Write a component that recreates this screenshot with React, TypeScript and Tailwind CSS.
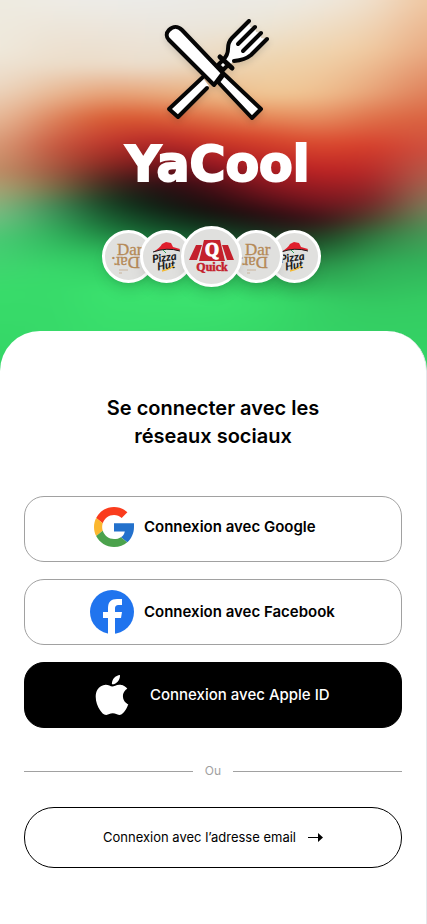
import type { ReactNode } from "react";

// Vertical colour ramps of the header backdrop, left to right: [y, colour]
const ramps: [number, string][][] = [
    [[0, "#eeebe0"], [50, "#efe9dc"], [85, "#ecdac6"], [115, "#e8bf9f"], [145, "#d89c78"], [170, "#c29068"], [190, "#a8a878"], [215, "#78c084"], [240, "#48cc74"], [290, "#38dc6a"], [370, "#34d566"]],
    [[0, "#eeece5"], [65, "#ecdcc8"], [95, "#e8b58f"], [120, "#dc8058"], [145, "#c8583e"], [168, "#a85840"], [187, "#807048"], [207, "#40905a"], [230, "#30b05c"], [270, "#38d96a"], [370, "#36da68"]],
    [[0, "#edece8"], [65, "#ecdcc8"], [95, "#e69c70"], [117, "#d9592f"], [140, "#c2382c"], [160, "#952820"], [180, "#4a241c"], [200, "#143c20"], [225, "#1a7038"], [255, "#2fc45f"], [290, "#3be26e"], [370, "#36da68"]],
    [[0, "#ebebe8"], [65, "#ebdfcf"], [95, "#e8a678"], [117, "#dc5c34"], [140, "#b82828"], [165, "#6e121c"], [185, "#240d12"], [205, "#0f1a12"], [230, "#14542c"], [260, "#2bb858"], [290, "#3be26e"], [370, "#36d868"]],
    [[0, "#ebe9e4"], [25, "#ebe6dc"], [65, "#ecd5b6"], [98, "#ebb07c"], [117, "#e07448"], [137, "#d23c26"], [160, "#a31a24"], [185, "#4a0d16"], [210, "#140c0c"], [230, "#123a20"], [260, "#2bb558"], [295, "#3ce470"], [370, "#34d264"]],
    [[0, "#ecebe5"], [25, "#ece5d6"], [60, "#eed5b0"], [95, "#f0c896"], [114, "#e8935f"], [137, "#d9482c"], [165, "#b81f24"], [190, "#7a141e"], [215, "#240c10"], [235, "#183020"], [265, "#2aa852"], [300, "#38de6a"], [370, "#34d264"]],
    [[0, "#eee9df"], [55, "#f0d3ac"], [95, "#efbf8e"], [119, "#e68c5f"], [142, "#dc4e30"], [170, "#c02424"], [200, "#7d161f"], [220, "#381016"], [240, "#1c4824"], [265, "#2a9048"], [300, "#35cf64"], [370, "#34d566"]],
    [[0, "#f0e0cc"], [50, "#f0caa0"], [92, "#e8a478"], [117, "#df7048"], [145, "#d63c2a"], [175, "#b02426"], [200, "#7a2024"], [218, "#50402c"], [236, "#2f7a40"], [265, "#30b058"], [310, "#34cc62"], [370, "#34d566"]],
    [[0, "#efc59e"], [50, "#e8a880"], [90, "#df805a"], [120, "#d9603f"], [150, "#cc5040"], [180, "#aa6450"], [205, "#80805c"], [230, "#4c9858"], [260, "#32b25a"], [300, "#34cc62"], [370, "#34d566"]],
];

function Backdrop() {
    return (
        <svg
            className="absolute inset-0 h-full w-full"
            viewBox="0 0 424 370"
            preserveAspectRatio="none"
            aria-hidden="true"
        >
            <defs>
                {ramps.map((ramp, i) => (
                    <linearGradient key={i} id={`ramp-${i}`} x1="0" y1="0" x2="0" y2="370" gradientUnits="userSpaceOnUse">
                        {ramp.map(([y, color]) => (
                            <stop key={y} offset={y / 370} stopColor={color} />
                        ))}
                    </linearGradient>
                ))}
                <filter id="soften" x="-200" y="-60" width="824" height="490" filterUnits="userSpaceOnUse" colorInterpolationFilters="sRGB">
                    <feGaussianBlur stdDeviation="26 6" />
                </filter>
            </defs>
            <g filter="url(#soften)">
                {ramps.map((_, i) => {
                    const first = i === 0;
                    const last = i === ramps.length - 1;
                    const x = first ? -120 : i * 53 - 27;
                    const end = last ? 540 : i * 53 + 27;
                    return <rect key={i} x={x} y="-40" width={end - x} height="450" fill={`url(#ramp-${i})`} />;
                })}
            </g>
        </svg>
    );
}

function Cutlery() {
    return (
        <svg
            className="h-[115px] w-[125px] drop-shadow-md"
            viewBox="0 0 125 115"
            fill="none"
            stroke="#060606"
            strokeWidth="4"
            strokeLinecap="round"
            strokeLinejoin="round"
            aria-hidden="true"
        >
            <path d="M48 68 14 99 23 107 54 76Z" fill="#fff" stroke="none" />
            <path d="M48 67 14 99 23 107 52 78" />
            <path
                d="M94 11 77 28Q73 33 73 43L68 51 73 56 79 51Q90 51 96 45L112 29 106 28 106 23 101 22 100 17 95 17Z"
                fill="#fff"
                stroke="none"
            />
            <path d="M94 11 77 28Q73 32 73 39Q73 45 68 50" />
            <path d="M100 17 83 34M106 23 88 41" />
            <path d="M112 29 96 45Q90 50 79 51" />
            <path d="M65 47 77 58" strokeWidth="5" />
            <path d="M68 50 73 55 68 60 63 55Z" fill="#fff" />
            <path d="M69 64 106 99 97 108 63 72Z" fill="#fff" />
            <path d="M14 20C18 16 23 16 27 20L68 63 59 75 14 30C11 27 11 23 14 20Z" fill="#fff" />
        </svg>
    );
}

function DarLogo() {
    return (
        <svg className="h-full w-full" viewBox="0 0 47 47" fontFamily="Liberation Serif, serif" fontSize="17" fill="#b58a58" stroke="#b58a58" strokeWidth="0.300">
            <text x="12" y="22">Dar</text>
            <text x="11" y="22" transform="rotate(180 23 23)">Dar.</text>
            <path d="M14 37H23M14 40H17" strokeWidth="0.500" />
        </svg>
    );
}

function PizzaHutLogo() {
    return (
        <svg className="h-full w-full" viewBox="0 0 47 47">
            <path d="M10 19Q17 15 19 11L23 9 28 10 30 14 37 16 36 18Q24 14 10 19Z" fill="#e01f2d" />
            <path d="M10 19Q24 14 37 18" fill="none" stroke="#1b1b1b" />
            <path d="M20 17 23 20" stroke="#2c9a56" />
            <g fontFamily="Lato, sans-serif" fontWeight="900" fontStyle="italic" fontSize="11" fill="#1b1b1b">
                <text x="9" y="28" transform="rotate(-8 24 24)">Pizza</text>
                <text x="13" y="36" transform="rotate(-8 24 24)">Hut</text>
            </g>
            <path d="M19 38Q25 37 31 33" fill="none" stroke="#f4b92f" strokeWidth="1.500" />
        </svg>
    );
}

function QuickLogo() {
    return (
        <svg className="h-full w-full" viewBox="0 0 55 55" fill="#c4202c" fontFamily="Liberation Serif, serif" fontWeight="700">
            <path d="M20 11H36L41 32H15Z" />
            <path d="M12 16H18L13 31H5Z" />
            <path d="M38 16H44L50 31H43Z" />
            <text x="28" y="27" fontSize="18" fill="#fff" stroke="#fff" textAnchor="middle">Q</text>
            <text x="28" y="42" fontSize="12" stroke="#c4202c" strokeWidth="0.500" textAnchor="middle">Quick</text>
        </svg>
    );
}

function Badge({ className, children }: { className: string; children: ReactNode }) {
    return (
        <div className={`relative shrink-0 overflow-hidden rounded-full border-3 border-white bg-[#e0e0de] shadow-lg ${className}`}>
            {children}
        </div>
    );
}

function GoogleIcon() {
    return (
        <svg className="size-10" viewBox="0 0 48 48" aria-hidden="true">
            <path fill="#fa3c1d" d="M24 9.500c3.540 0 6.710 1.220 9.210 3.600l6.850-6.850C35.900 2.380 30.470 0 24 0 14.620 0 6.510 5.380 2.560 13.220l7.980 6.190C12.430 13.720 17.740 9.500 24 9.500z" />
            <path fill="#2371cc" d="M48 19.500H24v9.800h13c-.6 3-2.300 5.500-4.700 7.100l7.700 6c4.500-4.200 8-10.400 8-18.400z" />
            <path fill="#fbb72f" d="M10.530 28.590c-.480-1.450-.760-2.990-.760-4.590s.270-3.140.760-4.590l-7.980-6.190C.920 16.460 0 20.120 0 24c0 3.880.920 7.540 2.560 10.780l7.970-6.190z" />
            <path fill="#4ba24c" d="M24 48c6.480 0 11.930-2.130 15.890-5.810l-7.730-6c-2.150 1.450-4.920 2.300-8.160 2.300-6.260 0-11.570-4.220-13.470-9.910l-7.980 6.190C6.510 42.620 14.620 48 24 48z" />
        </svg>
    );
}

function FacebookIcon() {
    return (
        <svg className="size-11" viewBox="0 0 44 44" aria-hidden="true">
            <circle cx="22" cy="22" r="22" fill="#2074ee" />
            <path d="M18 44V28H13V22H18V18C18 12 21 9 27 9H32V15H29C26 15 25 16 25 19V22H32L31 28H25V44Z" fill="#fff" />
        </svg>
    );
}

function AppleIcon() {
    return (
        <svg className="size-10" viewBox="0 0 24 24" fill="#fff" aria-hidden="true">
            <path d="M12.152 6.896c-.948 0-2.415-1.078-3.96-1.04-2.04.027-3.91 1.183-4.961 3.014-2.117 3.675-.546 9.103 1.519 12.09 1.013 1.454 2.208 3.09 3.792 3.039 1.52-.065 2.09-.987 3.935-.987 1.831 0 2.35.987 3.96.948 1.637-.026 2.676-1.48 3.676-2.948 1.156-1.688 1.636-3.325 1.662-3.415-.039-.013-3.182-1.221-3.22-4.857-.026-3.04 2.48-4.494 2.597-4.559-1.429-2.09-3.623-2.324-4.39-2.376-2-.156-3.675 1.09-4.61 1.09zM15.53 3.83c.843-1.012 1.4-2.427 1.245-3.83-1.207.052-2.662.805-3.532 1.818-.78.896-1.454 2.338-1.273 3.714 1.338.104 2.715-.688 3.559-1.701" />
        </svg>
    );
}

function SocialButton({ icon, label, className }: { icon: ReactNode; label: string; className: string }) {
    return (
        <button type="button" className={`h-[66px] w-full rounded-[20px] border text-[15px] ${className}`}>
            <span className="mx-auto flex w-[246px] items-center whitespace-nowrap">{icon}{label}</span>
        </button>
    );
}

function App() {
    return (
        <main className="relative flex min-h-screen flex-col font-['Inter',sans-serif] text-black">
            <header className="relative flex h-[371px] flex-col items-center overflow-hidden pt-[10px]">
                <Backdrop />
                <div className="relative flex flex-col items-center">
                    <div className="pl-2"><Cutlery /></div>
                    <h1 className="mt-2 pl-2 font-['DejaVu_Sans',sans-serif] text-[49px] leading-[64px] font-bold text-white [-webkit-text-stroke:2px_white]">
                        YaCool
                    </h1>
                    <div className="mt-[29px] flex items-center pr-1">
                        <Badge className="size-[53px]"><DarLogo /></Badge>
                        <Badge className="-ml-[15px] size-[53px]"><PizzaHutLogo /></Badge>
                        <Badge className="z-20 -ml-3 size-[61px]"><QuickLogo /></Badge>
                        <Badge className="z-10 -ml-3 size-[53px]"><DarLogo /></Badge>
                        <Badge className="-ml-[15px] size-[53px]"><PizzaHutLogo /></Badge>
                    </div>
                </div>
            </header>

            <section className="relative -mt-10 flex-1 rounded-t-[40px] border-r border-gray-200 bg-white px-6 pt-[63px] pb-14">
                <h2 className="mx-auto w-[240px] text-center text-xl leading-7 font-semibold">
                    Se connecter avec les réseaux sociaux
                </h2>

                <div className="mt-[46px] flex flex-col gap-[17px]">
                    <SocialButton
                        icon={<span className="mr-[10px] flex w-11 justify-end"><GoogleIcon /></span>}
                        label="Connexion avec Google"
                        className="border-neutral-400 bg-white pb-1 font-semibold"
                    />
                    <SocialButton
                        icon={<span className="mr-[10px] w-11"><FacebookIcon /></span>}
                        label="Connexion avec Facebook"
                        className="border-neutral-400 bg-white font-semibold"
                    />
                    <SocialButton
                        icon={<span className="mr-4 flex w-11 justify-center"><AppleIcon /></span>}
                        label="Connexion avec Apple ID"
                        className="border-black bg-black font-medium text-white"
                    />
                </div>

                <div className="mt-[33px] flex items-center gap-3 text-xs leading-5 text-neutral-400">
                    <span className="h-px flex-1 bg-neutral-400" />
                    Ou
                    <span className="h-px flex-1 bg-neutral-400" />
                </div>

                <button type="button" className="mt-[26px] flex h-[61px] w-full items-center justify-center gap-3 rounded-[30px] border border-black text-[13px]">
                    Connexion avec l’adresse email
                    <svg className="h-[9px] w-[15px]" viewBox="0 0 15 9" aria-hidden="true">
                        <path d="M0 4H10V0L15 4.500 10 9V5H0Z" />
                    </svg>
                </button>
            </section>
        </main>
    );
}

export default App;
